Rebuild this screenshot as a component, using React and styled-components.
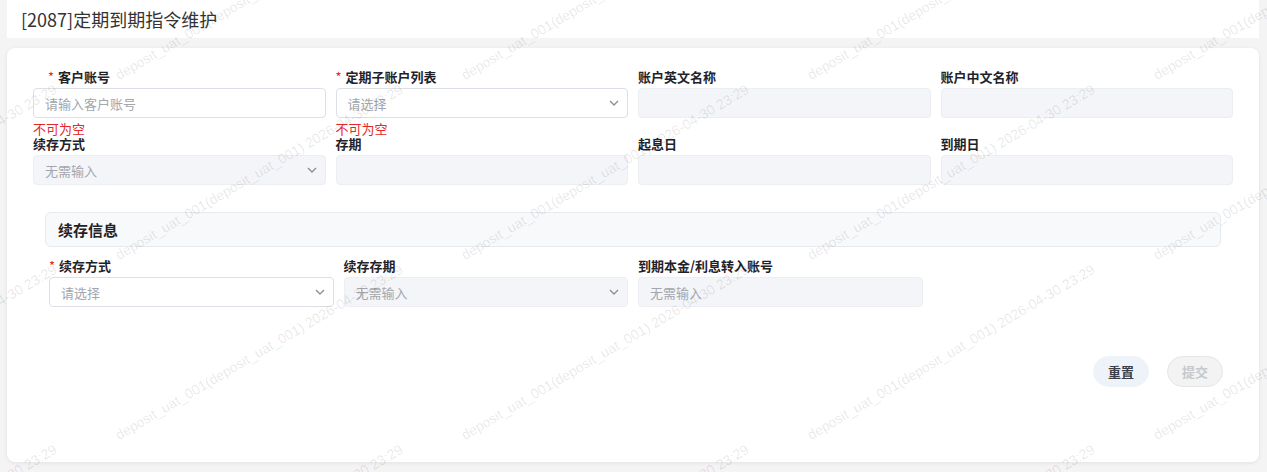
import React from "react";
import styled, { createGlobalStyle } from "styled-components";

const GlobalStyle = createGlobalStyle`
  html, body {
    margin: 0;
    padding: 0;
    background: #f4f4f5;
  }
  body {
    font-family: "Noto Sans CJK SC", "Noto Sans", sans-serif;
    color: #303133;
  }
`;

const Page = styled.div`
  position: relative;
  padding: 0 8px 10px 7px;
  overflow: hidden;
  height: 472px;
  box-sizing: border-box;
`;

const Header = styled.div`
  height: 38px;
  background: #fff;
  display: flex;
  align-items: center;
  padding-left: 14px;
  font-size: 18px;
  color: #333;
`;

const Card = styled.div`
  margin-top: 10px;
  height: 414px;
  box-sizing: border-box;
  background: #fff;
  border-radius: 8px;
  box-shadow: 0 1px 4px rgba(0, 0, 0, 0.08);
  padding: 20px 26px 0;
`;

const FieldGrid = styled.div`
  display: grid;
  grid-template-columns: repeat(4, 1fr);
  column-gap: 10px;
  align-items: start;
  margin: ${(p) => p.$margin || "0"};
`;

const Field = styled.div`
  display: flex;
  flex-direction: column;
  min-width: 0;
`;

const Label = styled.div`
  font-size: 13px;
  line-height: 18px;
  font-weight: 700;
  color: #1f2329;
  margin-bottom: 2px;
  padding-left: ${(p) => (p.$indent ? "15px" : "0")};
  white-space: nowrap;
`;

const Star = styled.span`
  color: #e5262b;
  font-weight: 400;
  margin-right: 4px;
`;

const Box = styled.div`
  height: 30px;
  box-sizing: border-box;
  border: 1px solid ${(p) => (p.$disabled ? "#eceef2" : "#dcdfe6")};
  background: ${(p) => (p.$disabled ? "#f4f5f8" : "#fff")};
  border-radius: 4px;
  display: flex;
  align-items: center;
  justify-content: space-between;
  padding: 0 8px 0 11px;
  font-size: 13px;
  color: #a3a6ad;
`;

const Chevron = styled.svg`
  width: 10px;
  height: 6px;
  flex: none;
`;

const ErrorText = styled.div`
  color: #e5262b;
  font-size: 13px;
  line-height: 13px;
  padding-top: 4px;
  height: 13px;
`;

const Section = styled.div`
  margin: 27px 12px 0;
  height: 35px;
  box-sizing: border-box;
  border: 1px solid #e6e9ee;
  border-radius: 6px;
  background: #f8f9fb;
  display: flex;
  align-items: center;
  padding-left: 12px;
  font-size: 15px;
  font-weight: 700;
  color: #1f2329;
`;

const Actions = styled.div`
  display: flex;
  justify-content: flex-end;
  gap: 18px;
  margin-top: 49px;
  padding-right: 10px;
`;

const Button = styled.button`
  width: 56px;
  height: 31px;
  border-radius: 16px;
  font-family: inherit;
  font-size: 13px;
  font-weight: 700;
  border: 1px solid ${(p) => (p.$disabled ? "#e6e6e6" : "#eef3f9")};
  background: ${(p) => (p.$disabled ? "#f3f3f3" : "#eef3f9")};
  color: ${(p) => (p.$disabled ? "#c6c8cc" : "#3a3f47")};
  padding: 0;
`;

const Watermarks = styled.div`
  position: absolute;
  inset: 0;
  pointer-events: none;
  overflow: hidden;
`;

const Mark = styled.span`
  position: absolute;
  font-family: "Liberation Sans", sans-serif;
  font-size: 14px;
  line-height: 14px;
  color: rgba(0, 0, 0, 0.1);
  white-space: nowrap;
  transform-origin: 0 100%;
  transform: rotate(-30.5deg);
`;

const ChevronIcon = () => (
  <Chevron viewBox="0 0 10 6">
    <path d="M1 1 L5 5 L9 1" fill="none" stroke="#8d9097" strokeWidth="1.4" />
  </Chevron>
);

const FormField = ({ label, required, indent, value, disabled, select, error }) => (
  <Field>
    <Label $indent={indent}>
      {required && <Star>*</Star>}
      {label}
    </Label>
    <Box $disabled={disabled}>
      <span>{value}</span>
      {select && <ChevronIcon />}
    </Box>
    {error && <ErrorText>{error}</ErrorText>}
  </Field>
);

const markText = "deposit_uat_001(deposit_uat_001) 2026-04-30 23:29";

const marks = [];
for (let i = -1; i <= 3; i++) {
  for (let j = -1; j <= 3; j++) {
    marks.push({ x: 120 + 346 * i, y: 82 + 180 * j });
  }
}

export default function App() {
  return (
    <>
      <GlobalStyle />
      <Page>
        <Header>[2087]定期到期指令维护</Header>
        <Card>
          <FieldGrid>
            <FormField label="客户账号" required indent value="请输入客户账号" error="不可为空" />
            <FormField label="定期子账户列表" required value="请选择" select error="不可为空" />
            <FormField label="账户英文名称" disabled />
            <FormField label="账户中文名称" disabled />
            <FormField label="续存方式" value="无需输入" disabled select />
            <FormField label="存期" disabled />
            <FormField label="起息日" disabled />
            <FormField label="到期日" disabled />
          </FieldGrid>

          <Section>续存信息</Section>

          <FieldGrid $margin="10px 16px 0">
            <FormField label="续存方式" required value="请选择" select />
            <FormField label="续存存期" value="无需输入" disabled select />
            <FormField label="到期本金/利息转入账号" value="无需输入" disabled />
          </FieldGrid>

          <Actions>
            <Button>重置</Button>
            <Button $disabled disabled>
              提交
            </Button>
          </Actions>
        </Card>
        <Watermarks>
          {marks.map((m, k) => (
            <Mark key={k} style={{ left: m.x, top: m.y - 14 }}>
              {markText}
            </Mark>
          ))}
        </Watermarks>
      </Page>
    </>
  );
}
